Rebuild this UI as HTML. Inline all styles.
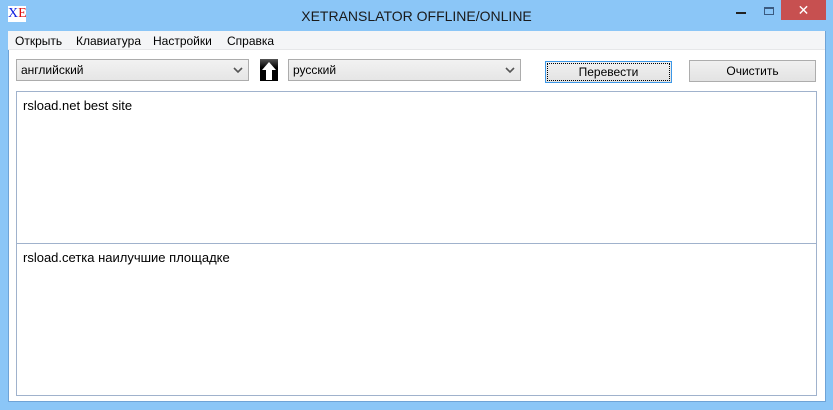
<!DOCTYPE html>
<html><head><meta charset="utf-8"><style>
*{margin:0;padding:0;box-sizing:border-box}
body{width:833px;height:410px;background:#8bc6f7;position:relative;overflow:hidden;font-family:"Liberation Sans","DejaVu Sans",sans-serif;font-size:12px;color:#000}
.abs{position:absolute}
#title{left:0;top:4px;width:833px;text-align:center;font-size:14px;color:#1a1a1a;line-height:24px}
#client{left:8px;top:31px;width:818px;height:371px;background:#fff;border:1px solid #6fa3d6;border-top:none}
#menu{left:8px;top:31px;width:817px;height:19px;background:#f4f5f7;border-bottom:1px solid #e6e7e9}
#menu span{position:absolute;top:3px;font-size:12px}
.combo{height:22px;border:1px solid #acacac;background:linear-gradient(#f2f2f2,#e6e6e6);font-size:12px;padding:3px 4px}
.combo svg{position:absolute;right:5px;top:7px}
.btn{height:22px;border:1px solid #adadad;background:linear-gradient(#f0f0f0,#e3e3e3);text-align:center;font-size:12px;line-height:20px}
.ta{border:1px solid #a0b2cc;background:#fff;font-size:13px;padding:6px 6px}
</style></head><body>
<div class="abs" style="left:8px;top:6px;width:18px;height:16px;background:#fff;font-family:'Liberation Serif',serif;font-size:14px;line-height:16px;text-align:center"><span style="color:#1020e0">X</span><span style="color:#e01010">E</span></div>
<div id="title" class="abs">XETRANSLATOR OFFLINE/ONLINE</div>
<div class="abs" style="left:736px;top:12px;width:10px;height:2px;background:#222"></div>
<div class="abs" style="left:764px;top:7px;width:10px;height:8px;border:1px solid #3a5a80;border-top-width:2px"></div>
<div class="abs" style="left:781px;top:0;width:45px;height:20px;background:#c75050;color:#fff;text-align:center;font-size:14px;line-height:20px;font-weight:bold">✕</div>
<div id="client" class="abs"></div>
<div id="menu" class="abs">
<span style="left:7px">Открыть</span><span style="left:68px">Клавиатура</span><span style="left:145px">Настройки</span><span style="left:219px">Справка</span>
</div>
<div class="abs combo" style="left:16px;top:59px;width:233px">английский<svg width="10" height="7"><path d="M1 1 L5 5 L9 1" stroke="#555" stroke-width="1.6" fill="none"/></svg></div>
<svg class="abs" style="left:260px;top:59px" width="18" height="22"><defs><linearGradient id="g" x1="0" y1="0" x2="0" y2="1"><stop offset="0" stop-color="#555"/><stop offset="0.4" stop-color="#000"/></linearGradient></defs><rect width="18" height="22" fill="url(#g)"/><path d="M9 3 L16 11 L12 11 L12 21 L6 21 L6 11 L2 11 Z" fill="#fff"/></svg>
<div class="abs combo" style="left:288px;top:59px;width:233px">русский<svg width="10" height="7"><path d="M1 1 L5 5 L9 1" stroke="#555" stroke-width="1.6" fill="none"/></svg></div>
<div class="abs btn" style="left:545px;top:61px;width:127px;border-color:#3c98e8;outline:1px dotted #000;outline-offset:-3px">Перевести</div>
<div class="abs btn" style="left:689px;top:60px;width:127px">Очистить</div>
<div class="abs ta" style="left:16px;top:91px;width:801px;height:153px">rsload.net best site</div>
<div class="abs ta" style="left:16px;top:243px;width:801px;height:153px">rsload.сетка наилучшие площадке</div>
</body></html>
